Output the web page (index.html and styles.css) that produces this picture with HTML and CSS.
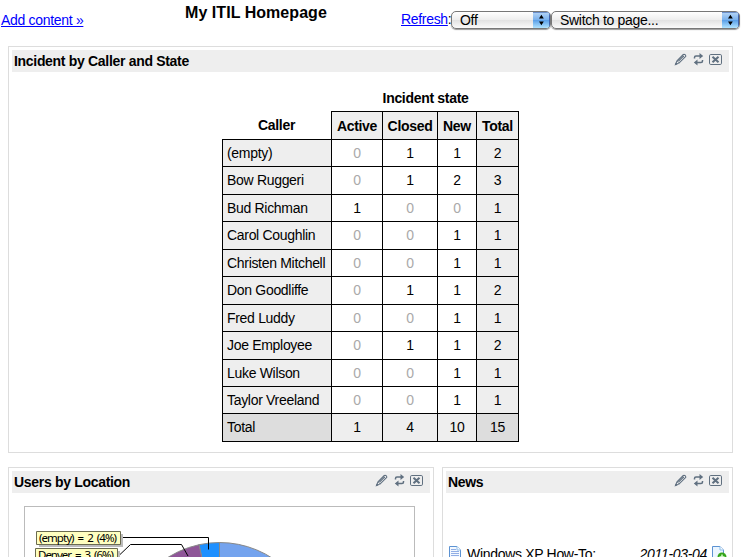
FILE: index.html
```html
<!DOCTYPE html>
<html lang="en">
<head>
<meta charset="utf-8">
<title>My ITIL Homepage</title>
<link rel="stylesheet" href="styles.css">
</head>
<body>
<svg class="defs" aria-hidden="true">
  <defs>
    <g id="tools" fill="none" stroke="#607080">
      <path d="M1.500 11.500 3 7.800 9.200 1.500Q11.700.8 11.800 3.400L5.200 9.900ZM4.500 8.200 9.800 2.900" stroke-width="1.100"/>
      <path d="M8.300 2.500 10.800 4.800M3 7.800 5.200 9.900" stroke-width=".8"/>
      <path d="M1 12.200 1.700 9.800 3.500 11.300Z" fill="#607080" stroke="none"/>
      <path d="M20.500 5.500V4.500Q20.500 3 22 3H26M28.500 7V8Q28.500 9.500 27 9.500H23" stroke-width="1.500"/>
      <path d="M25.500 0 29.200 3 25.500 6ZM23.500 6.500 19.800 9.500 23.500 12.500Z" fill="#607080" stroke="none"/>
      <rect x="35.500" y="1.500" width="12" height="10" rx="1.300"/>
      <path d="M38.500 3.700 44.500 9.300M44.500 3.700 38.500 9.300" stroke-width="2"/>
    </g>
  </defs>
</svg>
<header class="top">
  <a class="add" href="#">Add content »</a>
  <h1>My ITIL Homepage</h1>
  <div class="controls">
    <span class="refresh"><a href="#">Refresh</a>:</span>
    <div class="select off"><span>Off</span><i><svg width="17" height="16"><path d="M6 6.600 8.400 2.800 10.800 6.600ZM6 9.400 8.400 13.200 10.800 9.400Z"/></svg></i></div>
    <div class="select switch"><span>Switch to page...</span><i><svg width="17" height="16"><path d="M6 6.600 8.400 2.800 10.800 6.600ZM6 9.400 8.400 13.200 10.800 9.400Z"/></svg></i></div>
  </div>
</header>
<main>
  <section class="panel incidents">
    <div class="bar"><h2>Incident by Caller and State</h2><svg class="tools" width="49" height="13"><use href="#tools"/></svg></div>
    <table>
      <colgroup><col class="c1"><col class="c2"><col class="c3"><col class="c4"><col class="c5"></colgroup>
      <thead>
        <tr class="group"><th></th><th colspan="4">Incident state</th></tr>
        <tr class="heads"><th class="caller">Caller</th><th>Active</th><th>Closed</th><th>New</th><th>Total</th></tr>
      </thead>
      <tbody>
        <tr><td>(empty)</td><td class="z">0</td><td>1</td><td>1</td><td>2</td></tr>
        <tr><td>Bow Ruggeri</td><td class="z">0</td><td>1</td><td>2</td><td>3</td></tr>
        <tr><td>Bud Richman</td><td>1</td><td class="z">0</td><td class="z">0</td><td>1</td></tr>
        <tr><td>Carol Coughlin</td><td class="z">0</td><td class="z">0</td><td>1</td><td>1</td></tr>
        <tr><td>Christen Mitchell</td><td class="z">0</td><td class="z">0</td><td>1</td><td>1</td></tr>
        <tr><td>Don Goodliffe</td><td class="z">0</td><td>1</td><td>1</td><td>2</td></tr>
        <tr><td>Fred Luddy</td><td class="z">0</td><td class="z">0</td><td>1</td><td>1</td></tr>
        <tr><td>Joe Employee</td><td class="z">0</td><td>1</td><td>1</td><td>2</td></tr>
        <tr><td>Luke Wilson</td><td class="z">0</td><td class="z">0</td><td>1</td><td>1</td></tr>
        <tr class="short"><td>Taylor Vreeland</td><td class="z">0</td><td class="z">0</td><td>1</td><td>1</td></tr>
        <tr class="sum"><td>Total</td><td>1</td><td>4</td><td>10</td><td>15</td></tr>
      </tbody>
    </table>
  </section>
  <div class="columns">
    <section class="panel users">
      <div class="bar"><h2>Users by Location</h2><svg class="tools" width="49" height="13"><use href="#tools"/></svg></div>
      <div class="chart">
        <svg width="389" height="50" viewBox="25 507 389 50">
          <g stroke="#888" stroke-width="1">
            <path d="M219.500 639.500V542.500A97 97 0 0 1 316.500 639.500Z" fill="#74a3ee"/>
            <path d="M219.500 639.500 199 544.700A97 97 0 0 1 219.500 542.500Z" fill="#1e90ff"/>
            <path d="M219.500 639.500 160 563A97 97 0 0 1 199 544.700Z" fill="#8f5698"/>
          </g>
          <path d="M122 537.500H208.500V549.500M120 554.500 130.500 544.500H181.500L188 556" fill="none" stroke="#000"/>
          <path d="M39 534H123V547H39ZM38 551H120V564H38Z" fill="#bbb"/>
          <path d="M36.500 531.500H120.500V544.500H36.500ZM35.500 548.500H117.500V561.500H35.500Z" fill="#ffffc0" stroke="#6b6b50"/>
          <text x="39" y="542" textLength="78">(empty) = 2 (4%)</text>
          <text x="38" y="559" textLength="76">Denver = 3 (6%)</text>
        </svg>
      </div>
    </section>
    <section class="panel news">
      <div class="bar"><h2>News</h2><svg class="tools" width="49" height="13"><use href="#tools"/></svg></div>
      <div class="item">
        <svg width="12" height="15"><path d="M.5.5H8L11.500 4V14.500H.5Z" fill="#f4f9ff" stroke="#5c92d2"/><path d="M8 .5V4H11.500" fill="#fff" stroke="#8cbde8"/><path d="M2 3.500H7M2 5.500H10M2 7.500H10M2 9.500H10M2 11.500H10" stroke="#91aee5"/></svg>
        <span class="title">Windows XP How-To:</span>
        <em>2011-03-04</em>
        <svg width="15" height="15"><path d="M.5.500H8L11.500 4V14.500H.5Z" fill="#eaf5ff" stroke="#5c92d2"/><path d="M8 .5V4H11.500" fill="#fff" stroke="#8cbde8"/><circle cx="10" cy="11" r="4.500" fill="#35a51b"/><path d="M7.500 11H12.500M10 8.500V13.500" stroke="#d8ffd0" stroke-width="1.500"/></svg>
      </div>
    </section>
  </div>
</main>
</body>
</html>
```

FILE: styles.css
```css
* { box-sizing: border-box; }
body { margin: 0; width: 746px; height: 557px; overflow: hidden; background: #fff; color: #000; font: 14px/16px "Liberation Sans", Arial, sans-serif; letter-spacing: -.31px; }
.defs { display: block; width: 0; height: 0; }
a { color: #00f; text-decoration: underline; }
.top { display: flex; height: 46px; align-items: flex-start; }
.add { width: 184px; padding: 12px 0 0 1px; }
h1 { margin: 0; width: 217px; padding: 4px 0 0 1px; font-size: 16px; line-height: 18px; letter-spacing: .05px; white-space: nowrap; }
.controls { display: flex; align-items: flex-start; padding-top: 11px; }
.refresh { width: 50px; white-space: nowrap; }
.select { display: flex; height: 18px; border: 1px solid #777; border-radius: 5px; background: linear-gradient(#fff, #eee 48%, #e2e2e2 52%, #fafafa); box-shadow: 0 1px 1px #999; overflow: hidden; }
.select span { flex: 1; padding: 0 0 0 8px; white-space: nowrap; }
.select i { width: 17px; background: linear-gradient(#b8d6f6, #7bb2ed 48%, #5ba0e8 52%, #b0e3ff); box-shadow: inset -1px 0 #4263aa, inset 0 1px #6b8fcb; }
.select svg { display: block; }
.off { width: 100px; }
.switch { width: 189px; }
.panel { border: 1px solid #ddd; padding: 3px; background: #fff; }
.incidents { width: 725px; height: 407px; margin-left: 8px; }
.bar { display: flex; justify-content: space-between; height: 22px; background: #eee; }
.tools { margin: 3px 6px 0 0; }
h2 { margin: 0; padding: 3px 0 0 2px; font-size: 14px; line-height: 16px; }
table { table-layout: fixed; width: 297px; margin: 13px 0 0 210px; border-spacing: 0; }
.c1 { width: 110px; }
.c2 { width: 51px; }
.c3 { width: 55px; }
.c4 { width: 39px; }
.c5 { width: 42px; }
td, th { padding: 0; border: solid #000; border-width: 0 1px 1px 0; text-align: center; white-space: nowrap; }
td:first-child { border-left-width: 1px; padding-left: 4px; text-align: left; background: #eee; }
td:last-child, .heads th { background: #eee; }
.group th { height: 26px; border: 0; }
.heads th { height: 29px; border-top-width: 1px; padding-top: 1px; }
.heads .caller { background: #fff; padding: 0 0 1px; border-top-width: 0; }
td.z { color: #aaa; }
tbody tr:nth-child(odd) { height: 27px; }
tbody tr:nth-child(even) { height: 28px; }
tbody tr:nth-child(even) td, .sum td { padding-bottom: 1px; }
tbody tr.short { height: 27px; }
tbody tr.short td { padding-bottom: 0; }
tbody tr.sum { height: 28px; }
.sum td { background: #eee; }
.sum td:first-child, .sum td:last-child { background: #ddd; }
.columns { display: flex; gap: 8px; margin: 14px 0 0 8px; }
.users, .news { height: 90px; border-bottom: 0; padding-bottom: 0; }
.users { width: 426px; }
.news { width: 291px; }
.chart { width: 391px; height: 51px; margin: 13px 0 0 12px; border: 1px solid #bbb; border-bottom: 0; }
.chart svg { display: block; }
.chart text { font: 11.500px "Noto Sans", "DejaVu Sans", sans-serif; letter-spacing: 0; word-spacing: 2px; }
.item { display: flex; align-items: flex-start; height: 64px; padding: 53px 2px 0 3px; overflow: hidden; }
.title { flex: 1; padding-left: 6px; }
.item em { padding-right: 5px; }
```
